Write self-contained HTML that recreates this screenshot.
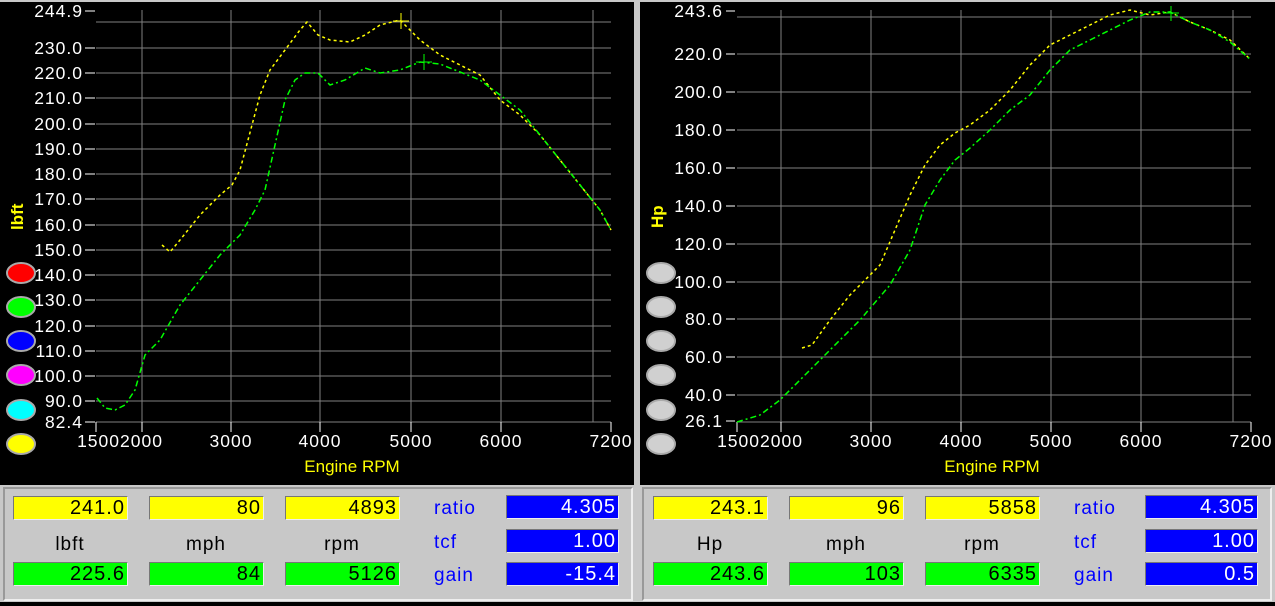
<!DOCTYPE html>
<html><head><meta charset="utf-8"><style>
body{margin:0;width:1275px;height:606px;background:#c8c8c8;overflow:hidden;font-family:"Liberation Sans",sans-serif;position:relative}
svg{position:absolute;left:0;top:0}
.b{position:absolute;height:24px;border:1px solid #777;border-right-color:#eee;border-bottom-color:#eee;box-sizing:border-box;font-size:20px;letter-spacing:1px;text-align:right;padding-right:2px;line-height:23px;color:#000}
.y{background:#ffff00}.g{background:#00ff00}.bl{background:#0000ff;color:#fff}
.l{position:absolute;font-size:19px;letter-spacing:1px;color:#000;text-align:center;width:114px}
.t{position:absolute;font-size:19px;letter-spacing:1px;color:#0000ff}
.p{position:absolute;top:487px;height:114px;border:2px solid #eee;border-top-color:#999;border-left-color:#999;box-sizing:border-box}
</style></head><body>
<svg width="1275" height="606" font-family="Liberation Sans, sans-serif">
<rect x="0" y="2" width="634" height="483" fill="#000"/>
<rect x="640" y="2" width="635" height="483" fill="#000"/>
<g stroke="#808080" stroke-width="1">
<line x1="96" y1="22" x2="611" y2="22"/>
<line x1="96" y1="48" x2="611" y2="48"/><line x1="96" y1="73" x2="611" y2="73"/><line x1="96" y1="98" x2="611" y2="98"/><line x1="96" y1="124" x2="611" y2="124"/><line x1="96" y1="149" x2="611" y2="149"/><line x1="96" y1="174" x2="611" y2="174"/><line x1="96" y1="199" x2="611" y2="199"/><line x1="96" y1="225" x2="611" y2="225"/><line x1="96" y1="250" x2="611" y2="250"/><line x1="96" y1="275" x2="611" y2="275"/><line x1="96" y1="300" x2="611" y2="300"/><line x1="96" y1="326" x2="611" y2="326"/><line x1="96" y1="351" x2="611" y2="351"/><line x1="96" y1="376" x2="611" y2="376"/><line x1="96" y1="401" x2="611" y2="401"/>
<line x1="142" y1="10" x2="142" y2="422"/><line x1="231" y1="10" x2="231" y2="422"/><line x1="320" y1="10" x2="320" y2="422"/><line x1="411" y1="10" x2="411" y2="422"/><line x1="501" y1="10" x2="501" y2="422"/><line x1="593" y1="10" x2="593" y2="422"/>
<line x1="96" y1="422" x2="611" y2="422"/>
<line x1="737" y1="17" x2="1251" y2="17"/><line x1="737" y1="54" x2="1251" y2="54"/><line x1="737" y1="92" x2="1251" y2="92"/><line x1="737" y1="130" x2="1251" y2="130"/><line x1="737" y1="168" x2="1251" y2="168"/><line x1="737" y1="206" x2="1251" y2="206"/><line x1="737" y1="244" x2="1251" y2="244"/><line x1="737" y1="282" x2="1251" y2="282"/><line x1="737" y1="319" x2="1251" y2="319"/><line x1="737" y1="357" x2="1251" y2="357"/><line x1="737" y1="395" x2="1251" y2="395"/>
<line x1="781" y1="10" x2="781" y2="422"/><line x1="871" y1="10" x2="871" y2="422"/><line x1="961" y1="10" x2="961" y2="422"/><line x1="1051" y1="10" x2="1051" y2="422"/><line x1="1141" y1="10" x2="1141" y2="422"/><line x1="1233" y1="10" x2="1233" y2="422"/>
<line x1="737" y1="422" x2="1251" y2="422"/>
</g>
<g stroke="#fff" stroke-width="1">
<line x1="85" y1="11" x2="95" y2="11"/><line x1="85" y1="48" x2="95" y2="48"/><line x1="85" y1="73" x2="95" y2="73"/><line x1="85" y1="98" x2="95" y2="98"/><line x1="85" y1="124" x2="95" y2="124"/><line x1="85" y1="149" x2="95" y2="149"/><line x1="85" y1="174" x2="95" y2="174"/><line x1="85" y1="199" x2="95" y2="199"/><line x1="85" y1="225" x2="95" y2="225"/><line x1="85" y1="250" x2="95" y2="250"/><line x1="85" y1="275" x2="95" y2="275"/><line x1="85" y1="300" x2="95" y2="300"/><line x1="85" y1="326" x2="95" y2="326"/><line x1="85" y1="351" x2="95" y2="351"/><line x1="85" y1="376" x2="95" y2="376"/><line x1="85" y1="401" x2="95" y2="401"/><line x1="85" y1="422" x2="95" y2="422"/>
<line x1="96" y1="422" x2="96" y2="432"/><line x1="142" y1="422" x2="142" y2="432"/><line x1="231" y1="422" x2="231" y2="432"/><line x1="320" y1="422" x2="320" y2="432"/><line x1="411" y1="422" x2="411" y2="432"/><line x1="501" y1="422" x2="501" y2="432"/><line x1="611" y1="422" x2="611" y2="432"/>
<line x1="726" y1="11" x2="735" y2="11"/><line x1="726" y1="54" x2="735" y2="54"/><line x1="726" y1="92" x2="735" y2="92"/><line x1="726" y1="130" x2="735" y2="130"/><line x1="726" y1="168" x2="735" y2="168"/><line x1="726" y1="206" x2="735" y2="206"/><line x1="726" y1="244" x2="735" y2="244"/><line x1="726" y1="282" x2="735" y2="282"/><line x1="726" y1="319" x2="735" y2="319"/><line x1="726" y1="357" x2="735" y2="357"/><line x1="726" y1="395" x2="735" y2="395"/><line x1="726" y1="421" x2="735" y2="421"/>
<line x1="737" y1="422" x2="737" y2="432"/><line x1="781" y1="422" x2="781" y2="432"/><line x1="871" y1="422" x2="871" y2="432"/><line x1="961" y1="422" x2="961" y2="432"/><line x1="1051" y1="422" x2="1051" y2="432"/><line x1="1141" y1="422" x2="1141" y2="432"/><line x1="1251" y1="422" x2="1251" y2="432"/>
</g>
<g fill="#fff" font-size="17.5" letter-spacing="1" text-anchor="end">
<text x="83" y="17">244.9</text><text x="83" y="54">230.0</text><text x="83" y="79">220.0</text><text x="83" y="104">210.0</text><text x="83" y="130">200.0</text><text x="83" y="155">190.0</text><text x="83" y="180">180.0</text><text x="83" y="205">170.0</text><text x="83" y="231">160.0</text><text x="83" y="256">150.0</text><text x="83" y="281">140.0</text><text x="83" y="306">130.0</text><text x="83" y="332">120.0</text><text x="83" y="357">110.0</text><text x="83" y="382">100.0</text><text x="83" y="407">90.0</text><text x="83" y="428">82.4</text>
<text x="723" y="17">243.6</text><text x="723" y="60">220.0</text><text x="723" y="98">200.0</text><text x="723" y="136">180.0</text><text x="723" y="174">160.0</text><text x="723" y="212">140.0</text><text x="723" y="250">120.0</text><text x="723" y="288">100.0</text><text x="723" y="325">80.0</text><text x="723" y="363">60.0</text><text x="723" y="401">40.0</text><text x="723" y="427">26.1</text>
</g>
<g fill="#fff" font-size="17.5" letter-spacing="1" text-anchor="middle">
<text x="120" y="447">15002000</text><text x="231" y="447">3000</text><text x="320" y="447">4000</text><text x="411" y="447">5000</text><text x="501" y="447">6000</text><text x="611" y="447">7200</text>
<text x="760" y="447">15002000</text><text x="871" y="447">3000</text><text x="961" y="447">4000</text><text x="1051" y="447">5000</text><text x="1141" y="447">6000</text><text x="1251" y="447">7200</text>
</g>
<g fill="#ffff00" font-size="17">
<text x="352" y="472" text-anchor="middle">Engine RPM</text>
<text x="992" y="472" text-anchor="middle">Engine RPM</text>
<text transform="translate(23,230) rotate(-90)" font-weight="bold">lbft</text>
<text transform="translate(663,228) rotate(-90)" font-weight="bold">Hp</text>
</g>
<g fill="none" stroke-width="1.5" stroke-dasharray="3 3">
<polyline stroke="#ffff00" points="162,245 170,252 180,240 200,215 220,195 232,185 240,170 248,140 260,95 270,70 285,50 300,30 307,22 318,35 330,40 350,42 365,35 380,25 400,20 420,40 440,55 460,65 480,75 500,100 520,115 540,135 560,160 580,185 600,210 611,230"/>
<polyline stroke="#00ff00" stroke-dasharray="6 3 2 3" points="97,398 105,408 115,410 125,405 135,390 145,355 160,340 180,305 200,280 220,255 240,235 255,210 265,190 275,145 285,100 295,80 305,73 318,73 330,85 345,80 365,68 380,73 400,70 420,62 440,64 460,72 480,80 500,95 520,110 540,135 560,160 580,185 600,210 611,230"/>
<polyline stroke="#ffff00" points="802,348 812,345 830,320 850,295 870,275 880,265 895,230 910,195 925,165 940,145 955,133 970,125 990,110 1010,90 1030,65 1050,45 1070,35 1090,25 1110,15 1130,10 1150,15 1170,12 1190,22 1210,30 1230,40 1251,60"/>
<polyline stroke="#00ff00" stroke-dasharray="6 3 2 3" points="737,422 760,415 780,400 800,380 830,350 860,320 890,285 910,250 925,205 940,180 955,160 970,148 990,130 1010,110 1030,95 1050,70 1070,50 1090,40 1110,30 1130,20 1150,12 1170,12 1190,22 1210,30 1230,42 1251,60"/>
</g>
<g stroke-width="1"><line x1="393" y1="21" x2="409" y2="21" stroke="#ffff00"/><line x1="401" y1="13" x2="401" y2="29" stroke="#ffff00"/>
<line x1="416" y1="62" x2="432" y2="62" stroke="#00ff00"/><line x1="424" y1="54" x2="424" y2="70" stroke="#00ff00"/>
<line x1="1163" y1="13" x2="1179" y2="13" stroke="#00ff00"/><line x1="1171" y1="6" x2="1171" y2="21" stroke="#00ff00"/></g>
<g stroke="#aaa" stroke-width="2">
<ellipse cx="21" cy="273" rx="14" ry="10" fill="#ff0000"/><ellipse cx="21" cy="307" rx="14" ry="10" fill="#00ff00"/><ellipse cx="21" cy="341" rx="14" ry="10" fill="#0000ff"/><ellipse cx="21" cy="375" rx="14" ry="10" fill="#ff00ff"/><ellipse cx="21" cy="410" rx="14" ry="10" fill="#00ffff"/><ellipse cx="21" cy="444" rx="14" ry="10" fill="#ffff00"/>
<ellipse cx="661" cy="273" rx="14" ry="10" fill="#d0d0d0"/><ellipse cx="661" cy="307" rx="14" ry="10" fill="#d0d0d0"/><ellipse cx="661" cy="341" rx="14" ry="10" fill="#d0d0d0"/><ellipse cx="661" cy="375" rx="14" ry="10" fill="#d0d0d0"/><ellipse cx="661" cy="410" rx="14" ry="10" fill="#d0d0d0"/><ellipse cx="661" cy="444" rx="14" ry="10" fill="#d0d0d0"/>
</g>
<rect x="0" y="602" width="1275" height="4" fill="#000"/>
</svg>
<div class="p" style="left:3px;width:630px"></div>
<div class="p" style="left:642px;width:630px"></div>
<div class="b y" style="left:13px;top:496px;width:115px">241.0</div>
<div class="b y" style="left:149px;top:496px;width:115px">80</div>
<div class="b y" style="left:285px;top:496px;width:115px">4893</div>
<div class="l" style="left:13px;top:534px">lbft</div><div class="l" style="left:149px;top:534px">mph</div><div class="l" style="left:285px;top:534px">rpm</div>
<div class="b g" style="left:13px;top:562px;width:115px">225.6</div>
<div class="b g" style="left:149px;top:562px;width:115px">84</div>
<div class="b g" style="left:285px;top:562px;width:115px">5126</div>
<div class="t" style="left:434px;top:498px">ratio</div><div class="t" style="left:434px;top:532px">tcf</div><div class="t" style="left:434px;top:565px">gain</div>
<div class="b bl" style="left:506px;top:495px;width:113px">4.305</div>
<div class="b bl" style="left:506px;top:529px;width:113px">1.00</div>
<div class="b bl" style="left:506px;top:562px;width:113px">-15.4</div>
<div class="b y" style="left:653px;top:496px;width:115px">243.1</div>
<div class="b y" style="left:789px;top:496px;width:115px">96</div>
<div class="b y" style="left:925px;top:496px;width:115px">5858</div>
<div class="l" style="left:653px;top:534px">Hp</div><div class="l" style="left:789px;top:534px">mph</div><div class="l" style="left:925px;top:534px">rpm</div>
<div class="b g" style="left:653px;top:562px;width:115px">243.6</div>
<div class="b g" style="left:789px;top:562px;width:115px">103</div>
<div class="b g" style="left:925px;top:562px;width:115px">6335</div>
<div class="t" style="left:1074px;top:498px">ratio</div><div class="t" style="left:1074px;top:532px">tcf</div><div class="t" style="left:1074px;top:565px">gain</div>
<div class="b bl" style="left:1145px;top:495px;width:113px">4.305</div>
<div class="b bl" style="left:1145px;top:529px;width:113px">1.00</div>
<div class="b bl" style="left:1145px;top:562px;width:113px">0.5</div>
</body></html>
